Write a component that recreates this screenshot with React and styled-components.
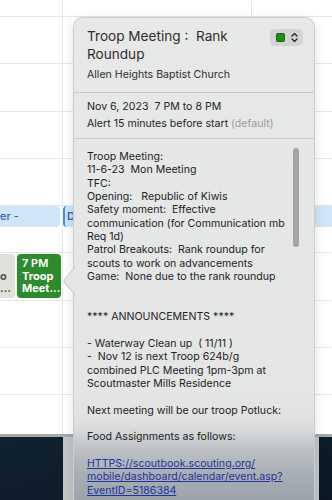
import React from 'react';
import styled, { createGlobalStyle } from 'styled-components';

const GlobalStyle = createGlobalStyle`
  html, body {
    margin: 0;
    padding: 0;
  }
  body {
    width: 332px;
    height: 500px;
    overflow: hidden;
    font-family: Inter, "Liberation Sans", sans-serif;
    -webkit-font-smoothing: antialiased;
  }
`;

const Screen = styled.div`
  position: relative;
  width: 332px;
  height: 500px;
  overflow: hidden;
  display: flex;
  flex-direction: column;
  background: linear-gradient(160deg, #0c1b29 0%, #13283a 45%, #0b1824 100%);
`;

const Calendar = styled.div`
  height: 434px;
  flex-shrink: 0;
  background: #fff;
  border-bottom: 3px solid #a6a8aa;
  display: flex;
  flex-direction: column;
  overflow: hidden;
`;

const Row = styled.div`
  box-sizing: border-box;
  height: ${(p) => p.$h}px;
  flex-shrink: 0;
  display: grid;
  grid-template-columns: 63px 189px 1fr;
  border-bottom: ${(p) => (p.$open ? 'none' : '1px solid #e6e6e6')};
`;

const Cell = styled.div`
  border-right: ${(p) => (p.$last ? 'none' : '1px solid #e6e6e6')};
  display: flex;
  align-items: flex-start;
  gap: 2px;
  overflow: hidden;
`;

const AllDayBar = styled.div`
  flex: 1;
  height: 21px;
  margin-right: ${(p) => (p.$end ? 2 : 0)}px;
  background: #cfe5f8;
  border-radius: ${(p) => (p.$end ? '0 4px 4px 0' : p.$start ? '4px 0 0 4px' : '0')};
  border-left: ${(p) => (p.$start ? '2px solid #3f8fe0' : 'none')};
  color: #2a67ad;
  font-size: 11px;
  line-height: 21px;
  padding-left: ${(p) => (p.$start ? 2 : 0)}px;
  white-space: nowrap;
  font-weight: ${(p) => (p.$start ? 600 : 500)};
`;

const Pill = styled.div`
  flex-shrink: 0;
  box-sizing: border-box;
  width: ${(p) => p.$w || 44}px;
  height: 44px;
  margin-top: 1px;
  border-radius: ${(p) => (p.$past ? '0 4px 4px 0' : '4px')};
  padding: 3px 0 0 5px;
  background: ${(p) => (p.$past ? '#dfe1db' : '#2f8a2f')};
  color: ${(p) => (p.$past ? '#4b4f4a' : '#fff')};
  font-size: 11px;
  line-height: 12.5px;
  font-weight: 700;
  white-space: nowrap;
`;

const PastPill = styled(Pill)`
  padding-left: 0;
`;

const PillTime = styled.div`
  font-weight: 600;
  min-height: 12.5px;
`;

const Desktop = styled.div`
  flex: 1;
  display: flex;
`;

const DesktopGap = styled.div`
  width: ${(p) => p.$w}px;
  flex-shrink: 0;
  background: ${(p) => (p.$edge ? '#c4c7ca' : 'transparent')};
`;

const Popover = styled.div`
  position: absolute;
  left: 73px;
  top: 17px;
  width: 242px;
  height: 500px;
  box-sizing: border-box;
  border: 1px solid #cdcdcd;
  border-bottom: none;
  border-radius: 10px 10px 0 0;
  background: linear-gradient(
    to bottom,
    #e7e8e8 0px,
    #e4e5e5 380px,
    #e0e0e0 403px,
    #d3d5d7 416px,
    #bcc0c4 433px,
    #a8aeb5 456px,
    #9ca3ab 483px
  );
  box-shadow: 0 3px 12px rgba(0, 0, 0, 0.12);
  color: #2a2a2a;
`;

const Pointer = styled.svg`
  position: absolute;
  left: -11px;
  top: 249px;
`;

const Header = styled.div`
  padding: 9px 11px 10px 13px;
`;

const TitleRow = styled.div`
  display: flex;
  justify-content: space-between;
  align-items: flex-start;
`;

const Title = styled.div`
  font-size: 13.6px;
  line-height: 18px;
  color: #2e2e2e;
  white-space: pre;
`;

const ColorPicker = styled.div`
  margin-top: 2px;
  width: 33px;
  height: 17px;
  box-sizing: border-box;
  border-radius: 5px;
  background: #d3d4d4;
  display: flex;
  align-items: center;
  padding-left: 6px;
  gap: 6px;
`;

const Swatch = styled.div`
  width: 9px;
  height: 9px;
  box-sizing: border-box;
  background: #1f8a1f;
  border: 1px solid #156515;
  border-radius: 1.5px;
`;

const Location = styled.div`
  margin-top: 5px;
  font-size: 10.6px;
  line-height: 14px;
  color: #2f2f2f;
`;

const Divider = styled.div`
  height: 1px;
  background: #c9c9c9;
`;

const DateSection = styled.div`
  padding: 5px 13px 6px;
  font-size: 10.6px;
  line-height: 17px;
  color: #262626;
`;

const Muted = styled.span`
  color: #9b9b9b;
`;

const Notes = styled.div`
  position: relative;
  padding: 11px 13px 0;
  font-size: 10.6px;
  line-height: 13.35px;
  color: #232323;
`;

const NoteLine = styled.div`
  white-space: pre;
  min-height: 13.35px;
`;

const Link = styled.a`
  display: block;
  color: #1f349c;
  text-decoration: underline;
  white-space: pre;
`;

const ScrollThumb = styled.div`
  position: absolute;
  right: 15px;
  top: 9px;
  width: 6px;
  height: 99px;
  border-radius: 3px;
  background: #a6a6a6;
`;

const rowHeights = [17, 47, 48, 47, 47, 47, 48, 47, 47, 40];

const notes = [
  'Troop Meeting:',
  '11-6-23  Mon Meeting',
  'TFC:',
  'Opening:   Republic of Kiwis',
  'Safety moment:  Effective',
  'communication (for Communication mb',
  'Req 1d)',
  'Patrol Breakouts:  Rank roundup for',
  'scouts to work on advancements',
  'Game:  None due to the rank roundup',
  '',
  '',
  '**** ANNOUNCEMENTS ****',
  '',
  '- Waterway Clean up  ( 11/11 )',
  '-  Nov 12 is next Troop 624b/g',
  'combined PLC Meeting 1pm-3pm at',
  'Scoutmaster Mills Residence',
  '',
  'Next meeting will be our troop Potluck:',
  '',
  'Food Assignments as follows:',
  '',
];

const link = [
  'HTTPS://scoutbook.scouting.org/',
  'mobile/dashboard/calendar/event.asp?',
  'EventID=5186384',
];

function ChevronUpDown() {
  return (
    <svg width="7" height="11" viewBox="0 0 7 11">
      <path d="M1 4 L3.5 1.5 L6 4 M1 7 L3.5 9.5 L6 7" fill="none" stroke="#2a2a2a" strokeWidth="1.4" strokeLinecap="round" strokeLinejoin="round" />
    </svg>
  );
}

function CalendarGrid() {
  return (
    <Calendar>
      {rowHeights.map((h, i) => (
        <Row key={i} $h={h} $open={i === rowHeights.length - 1}>
          {i === 5 ? (
            <>
              <Cell><AllDayBar $end>er -</AllDayBar></Cell>
              <Cell style={{ borderRight: 'none' }}><AllDayBar $start>D</AllDayBar></Cell>
              <Cell $last><AllDayBar /></Cell>
            </>
          ) : i === 6 ? (
            <>
              <Cell>
                <PastPill $past $w={15}>
                  <PillTime />
                  <div>o</div>
                  <div>...</div>
                </PastPill>
                <Pill>
                  <PillTime>7 PM</PillTime>
                  <div>Troop</div>
                  <div>Meet...</div>
                </Pill>
              </Cell>
              <Cell />
              <Cell $last />
            </>
          ) : (
            <>
              <Cell />
              <Cell />
              <Cell $last />
            </>
          )}
        </Row>
      ))}
    </Calendar>
  );
}

export default function App() {
  return (
    <>
      <GlobalStyle />
      <Screen>
        <CalendarGrid />
        <Desktop>
          <DesktopGap $w={63} />
          <DesktopGap $w={10} $edge />
          <DesktopGap $w={242} />
          <DesktopGap $w={4} $edge />
        </Desktop>

        <Popover>
          <Pointer width="12" height="28" viewBox="0 0 12 28">
            <path d="M12 0 L1.5 12.5 Q0.5 14 1.5 15.5 L12 28" fill="#e4e5e5" stroke="#c4c4c4" strokeWidth="1" />
          </Pointer>
          <Header>
            <TitleRow>
              <Title>{'Troop Meeting :  Rank\nRoundup'}</Title>
              <ColorPicker>
                <Swatch />
                <ChevronUpDown />
              </ColorPicker>
            </TitleRow>
            <Location>Allen Heights Baptist Church</Location>
          </Header>
          <Divider />
          <DateSection>
            <div>Nov 6, 2023&nbsp;&nbsp;7 PM to 8 PM</div>
            <div>Alert 15 minutes before start <Muted>(default)</Muted></div>
          </DateSection>
          <Divider />
          <Notes>
            <ScrollThumb />
            {notes.map((line, i) => (
              <NoteLine key={i}>{line}</NoteLine>
            ))}
            {link.map((line) => (
              <Link key={line} href="#">{line}</Link>
            ))}
          </Notes>
        </Popover>
      </Screen>
    </>
  );
}
